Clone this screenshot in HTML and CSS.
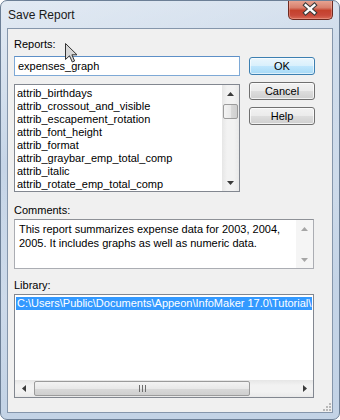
FILE: index.html
```html
<!DOCTYPE html>
<html>
<head>
<meta charset="utf-8">
<link rel="stylesheet" href="styles.css">
</head>
<body>
<div class="window">
  <div class="titlebar">
    <span class="title">Save Report</span>
    <div class="close">
      <svg width="45" height="19" viewBox="0 0 45 19">
        <path d="M18 5 L27 13 M27 5 L18 13" stroke="#3b3b3b" stroke-width="4.6" stroke-linecap="square" fill="none"/>
        <path d="M18 5 L27 13 M27 5 L18 13" stroke="#ffffff" stroke-width="2.4" stroke-linecap="square" fill="none"/>
      </svg>
    </div>
  </div>
  <div class="client">
    <div class="top">
      <div class="leftcol">
        <div class="label">Reports:</div>
        <div class="input">expenses_graph</div>
        <div class="listbox">
          <div class="items">
            <div class="item">attrib_birthdays</div>
            <div class="item">attrib_crossout_and_visible</div>
            <div class="item">attrib_escapement_rotation</div>
            <div class="item">attrib_font_height</div>
            <div class="item">attrib_format</div>
            <div class="item">attrib_graybar_emp_total_comp</div>
            <div class="item">attrib_italic</div>
            <div class="item">attrib_rotate_emp_total_comp</div>
          </div>
          <div class="vscroll">
            <div class="arrowbox"><svg width="7" height="4" viewBox="0 0 7 4"><path d="M0 4 L3.5 0 L7 4 Z" fill="#3a3a3a"/></svg></div>
            <div class="thumb"></div>
            <div class="track"></div>
            <div class="arrowbox"><svg width="7" height="4" viewBox="0 0 7 4"><path d="M0 0 L3.5 4 L7 0 Z" fill="#3a3a3a"/></svg></div>
          </div>
        </div>
      </div>
      <div class="buttons">
        <div class="btn default">OK</div>
        <div class="btn">Cancel</div>
        <div class="btn">Help</div>
      </div>
    </div>
    <div class="label comments-label">Comments:</div>
    <div class="textarea">
      <div class="tatext">This report summarizes expense data for 2003, 2004,<br>2005. It includes graphs as well as numeric data.</div>
      <div class="vscroll disabled">
        <div class="arrowbox"><svg width="7" height="4" viewBox="0 0 7 4"><path d="M0 4 L3.5 0 L7 4 Z" fill="#a6a6a6"/></svg></div>
        <div class="track"></div>
        <div class="arrowbox"><svg width="7" height="4" viewBox="0 0 7 4"><path d="M0 0 L3.5 4 L7 0 Z" fill="#a6a6a6"/></svg></div>
      </div>
    </div>
    <div class="label library-label">Library:</div>
    <div class="liblist">
      <div class="libitems">
        <div class="libitem selected">C:\Users\Public\Documents\Appeon\InfoMaker 17.0\Tutorial\</div>
      </div>
      <div class="hscroll">
        <div class="harrow"><svg width="4" height="7" viewBox="0 0 4 7"><path d="M4 0 L0 3.5 L4 7 Z" fill="#3a3a3a"/></svg></div>
        <div class="hthumb">
          <svg width="7" height="7" viewBox="0 0 7 7"><path d="M0.5 0 V7 M3.5 0 V7 M6.5 0 V7" stroke="#6d6d6d" stroke-width="1"/></svg>
        </div>
        <div class="htrack"></div>
        <div class="harrow"><svg width="4" height="7" viewBox="0 0 4 7"><path d="M0 0 L4 3.5 L0 7 Z" fill="#3a3a3a"/></svg></div>
      </div>
    </div>
    <div class="grip">
      <svg width="9" height="9" viewBox="0 0 9 9">
        <rect x="7" y="1" width="2" height="2" fill="#b8b8b8"/>
        <rect x="4" y="4" width="2" height="2" fill="#b8b8b8"/>
        <rect x="7" y="4" width="2" height="2" fill="#b8b8b8"/>
        <rect x="1" y="7" width="2" height="2" fill="#b8b8b8"/>
        <rect x="4" y="7" width="2" height="2" fill="#b8b8b8"/>
        <rect x="7" y="7" width="2" height="2" fill="#b8b8b8"/>
      </svg>
    </div>
  </div>
  <svg class="cursor" width="13" height="20" viewBox="0 0 13 20">
    <path d="M0.5 0.5 L0.5 16.5 L4.5 12.8 L7.3 19 L9.6 18 L6.9 11.8 L12 11.8 Z" fill="#d8d8d8" stroke="#333" stroke-width="1" stroke-linejoin="round"/>
  </svg>
</div>
</body>
</html>
```

FILE: styles.css
```css
html, body {
  margin: 0;
  padding: 0;
  background: #ffffff;
}

.window {
  position: relative;
  width: 340px;
  height: 420px;
  box-sizing: border-box;
  border: 1px solid #6c7f96;
  border-radius: 7px;
  padding: 0 6px 6px 6px;
  background:
    linear-gradient(160deg, rgba(255,255,255,0.35) 0%, rgba(255,255,255,0) 30%, rgba(255,255,255,0.15) 55%, rgba(255,255,255,0) 75%),
    linear-gradient(180deg, #d3dfed 0%, #c6d5e7 40%, #c3d3e6 100%);
  font-family: "Liberation Sans", Arial, sans-serif;
  font-size: 11px;
  color: #000;
  overflow: hidden;
}

.titlebar {
  height: 27px;
  display: flex;
  align-items: center;
}

.title {
  padding-left: 1px;
  font-size: 12px;
  color: #1a1a1a;
  margin-top: 1px;
}

.close {
  margin-left: auto;
  align-self: flex-start;
  margin-top: -1px;
  width: 45px;
  height: 20px;
  box-sizing: border-box;
  border: 1px solid #6e2a20;
  border-top: none;
  border-radius: 0 0 5px 5px;
  background: linear-gradient(180deg, #e9a896 0%, #d8806d 40%, #c4412c 55%, #c8493a 80%, #d86a55 100%);
  box-shadow: inset 0 0 0 1px rgba(255,200,190,0.35);
  display: flex;
}

.close svg {
  display: block;
  margin-top: 0px;
  margin-left: -1px;
}

.client {
  height: 385px;
  box-sizing: border-box;
  border: 1px solid #8596ab;
  background: #f0f0f0;
  padding: 9px 0 0 6px;
}

.top {
  display: flex;
}

.leftcol {
  width: 226px;
}

.label {
  height: 13px;
  line-height: 13px;
}

.input {
  margin-top: 5px;
  height: 20px;
  width: 226px;
  box-sizing: border-box;
  border: 1px solid #7ea9d6;
  border-top-color: #5d8fc7;
  background: #fff;
  line-height: 18px;
  padding-left: 3px;
}

.listbox {
  margin-top: 8px;
  width: 226px;
  height: 108px;
  box-sizing: border-box;
  border: 1px solid #828790;
  background: #fff;
  display: flex;
  overflow: hidden;
}

.items {
  flex: 1;
  padding: 2px 0 0 2px;
  overflow: hidden;
}

.item {
  height: 13px;
  line-height: 13px;
  white-space: nowrap;
}

.vscroll {
  width: 17px;
  display: flex;
  flex-direction: column;
  background: linear-gradient(90deg, #e6e6e6 0%, #f2f2f2 30%, #f2f2f2 70%, #e9e9e9 100%);
}

.arrowbox {
  height: 17px;
  display: flex;
  align-items: center;
  justify-content: center;
  flex: none;
}

.thumb {
  height: 15px;
  margin: 2px 1px 0 1px;
  box-sizing: border-box;
  border: 1px solid #9b9b9b;
  border-radius: 2px;
  background: linear-gradient(90deg, #f3f3f3 0%, #e9e9e9 50%, #d9d9d9 51%, #cfcfcf 100%);
  flex: none;
}

.track {
  flex: 1;
}

.buttons {
  margin-left: 9px;
  margin-top: 19px;
  display: flex;
  flex-direction: column;
  gap: 7px;
}

.btn {
  width: 66px;
  height: 18px;
  box-sizing: border-box;
  border: 1px solid #707070;
  border-radius: 3px;
  background: linear-gradient(180deg, #f2f2f2 0%, #ebebeb 48%, #dddddd 52%, #cfcfcf 100%);
  box-shadow: inset 0 0 0 1px rgba(255,255,255,0.7);
  text-align: center;
  line-height: 16px;
  font-size: 11px;
}

.btn.default {
  border-color: #3c7fb1;
  background: linear-gradient(180deg, #eaf6fd 0%, #d9f0fc 48%, #bee6fd 52%, #a7d9f5 100%);
  box-shadow: inset 0 0 0 1px rgba(255,255,255,0.6);
}

.comments-label {
  margin-top: 12px;
}

.textarea {
  margin-top: 2px;
  width: 300px;
  height: 50px;
  box-sizing: border-box;
  border: 1px solid #abadb3;
  border-top-color: #8e9197;
  background: #fff;
  display: flex;
}

.tatext {
  flex: 1;
  padding: 2px 0 0 4px;
  line-height: 14px;
  white-space: nowrap;
  overflow: hidden;
}

.vscroll.disabled {
  background: #f5f5f5;
}

.library-label {
  margin-top: 10px;
}

.liblist {
  margin-top: 2px;
  width: 300px;
  height: 104px;
  box-sizing: border-box;
  border: 1px solid #828790;
  background: #fff;
  display: flex;
  flex-direction: column;
}

.libitems {
  flex: 1;
  padding: 2px 1px 0 1px;
  overflow: hidden;
}

.libitem {
  height: 13px;
  line-height: 13px;
  white-space: nowrap;
  overflow: hidden;
  padding-left: 1px;
}

.libitem.selected {
  background: #3399ff;
  color: #fff;
}

.hscroll {
  height: 17px;
  display: flex;
  align-items: stretch;
  background: linear-gradient(180deg, #e6e6e6 0%, #f2f2f2 30%, #f2f2f2 70%, #e9e9e9 100%);
}

.harrow {
  width: 17px;
  display: flex;
  align-items: center;
  justify-content: center;
  flex: none;
}

.hthumb {
  width: 216px;
  margin: 1px 0 1px 2px;
  box-sizing: border-box;
  border: 1px solid #9b9b9b;
  border-radius: 2px;
  background: linear-gradient(180deg, #f3f3f3 0%, #e9e9e9 50%, #d9d9d9 51%, #cfcfcf 100%);
  display: flex;
  align-items: center;
  justify-content: center;
  flex: none;
}

.htrack {
  flex: 1;
}

.grip {
  width: 9px;
  height: 9px;
  margin: 4px 1px 0 auto;
}

.grip svg {
  display: block;
}

.cursor {
  position: absolute;
  left: 64px;
  top: 42px;
}
```
